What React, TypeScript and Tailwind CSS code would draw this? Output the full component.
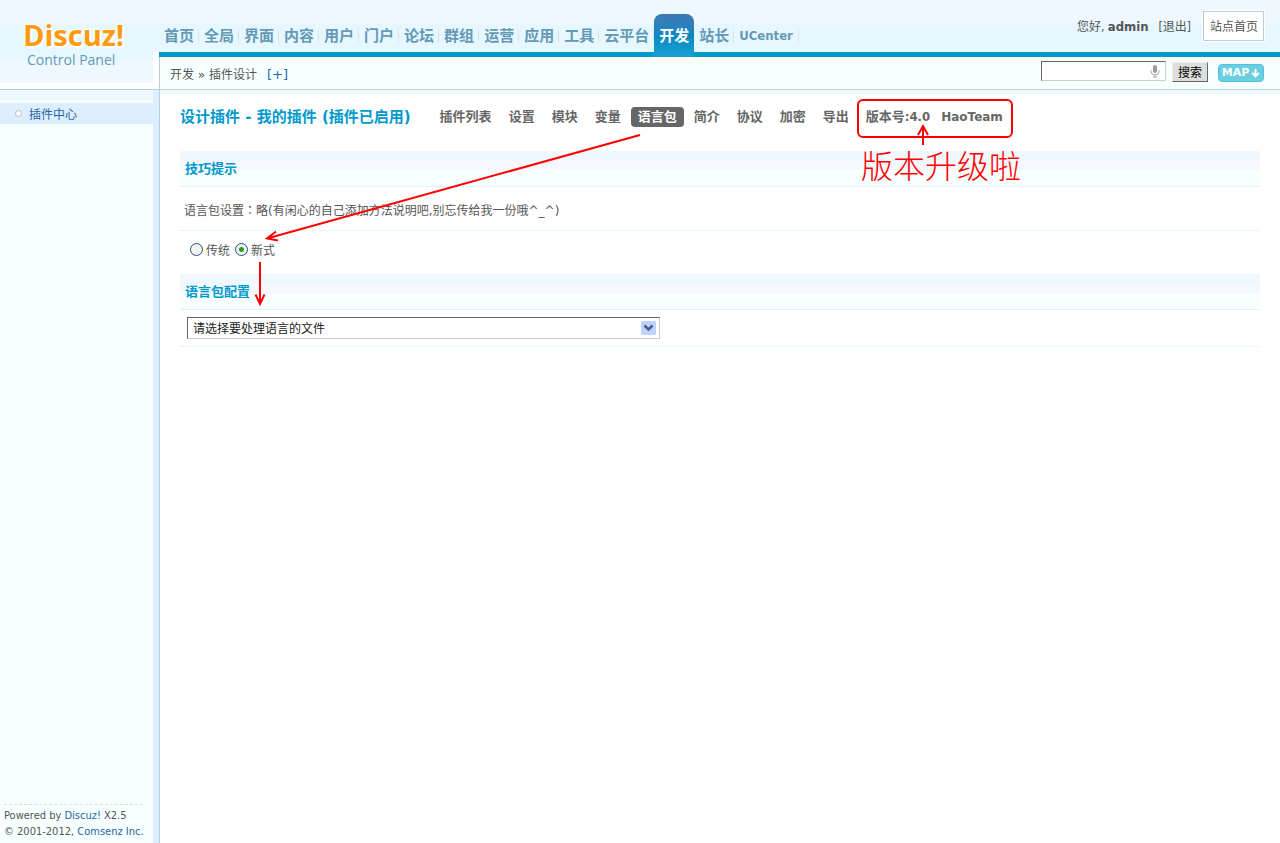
import { useState } from "react"

interface NavItem {
  name: string
  href: string
}

// Constants
const TOP_NAV: readonly NavItem[] = [
  { name: "首页", href: "#index" },
  { name: "全局", href: "#global" },
  { name: "界面", href: "#style" },
  { name: "内容", href: "#topic" },
  { name: "用户", href: "#user" },
  { name: "门户", href: "#portal" },
  { name: "论坛", href: "#forum" },
  { name: "群组", href: "#group" },
  { name: "运营", href: "#extended" },
  { name: "应用", href: "#plugin" },
  { name: "工具", href: "#tools" },
  { name: "云平台", href: "#cloud" },
  { name: "开发", href: "#dev" },
  { name: "站长", href: "#founder" },
  { name: "UCenter", href: "#uc" },
]

const SUB_NAV: readonly NavItem[] = [
  { name: "插件列表", href: "#list" },
  { name: "设置", href: "#setting" },
  { name: "模块", href: "#modules" },
  { name: "变量", href: "#vars" },
  { name: "语言包", href: "#lang" },
  { name: "简介", href: "#intro" },
  { name: "协议", href: "#license" },
  { name: "加密", href: "#encrypt" },
  { name: "导出", href: "#export" },
]

const ACTIVE_TOP = "开发"
const ACTIVE_SUB = "语言包"

// Components
const Logo = () => (
  <a href="#home" className="flex h-[83px] flex-col pt-5 pl-[23px] whitespace-nowrap">
    <span className="font-['Open_Sans',sans-serif] text-[29px] leading-[30px] font-bold text-[#ff9a10] [text-shadow:1px_1px_1px_#fff,2px_2px_1px_#fff,-1px_-1px_1px_#fff]">
      Discuz!
    </span>
    <span className="pl-1 font-['Open_Sans',sans-serif] text-[14px] leading-5 text-[#639ab5]">Control Panel</span>
  </a>
)

const TopNav = () => (
  <nav className="flex items-end" aria-label="主菜单">
    {TOP_NAV.map(item =>
      item.name === ACTIVE_TOP ? (
        <a
          key={item.name}
          href={item.href}
          aria-current="page"
          className="z-10 -mb-[5px] h-[43px] rounded-t-lg bg-linear-to-b from-[#3b79b5] via-[#0b87c2] to-[#18a2d3] px-[5px] text-[15px] leading-[45px] font-bold whitespace-nowrap text-white"
        >
          {item.name}
        </a>
      ) : (
        <a
          key={item.name}
          href={item.href}
          className="flex h-[33px] items-start text-[15px] leading-[34px] font-bold whitespace-nowrap text-[#639ab5]"
        >
          <span className={item.name === "UCenter" ? "px-[5px] text-[13px]" : "pr-1 pl-[5px]"}>{item.name}</span>
          <span className="mt-[7px] h-5 w-px bg-linear-to-b from-[#eef5fa] via-[#d3dde5] to-[#eef5fa]" />
        </a>
      ),
    )}
  </nav>
)

const Toolbar = () => (
  <div className="flex h-8 items-center justify-between border-t-[5px] border-white bg-[#f7ffff] pr-4 pb-0.5 pl-2.5">
    <div className="flex items-center font-['DejaVu_Sans','Noto_Sans_CJK_SC',sans-serif] text-[12px]">
      <span className="whitespace-pre">开发 » 插件设计</span>
      <a href="#add" className="ml-2.5 text-[13px] text-[#2366a8]">
        [+]
      </a>
    </div>
    <form className="flex items-center" onSubmit={e => e.preventDefault()}>
      <div className="-mt-[7px] flex h-5 w-[125px] items-center border border-t-[#666] border-r-[#ccc] border-b-[#ccc] border-l-[#666] bg-white">
        <input type="text" aria-label="搜索" className="h-full min-w-0 flex-1 bg-transparent px-1 text-[12px] outline-none" />
        <svg width="10" height="14" viewBox="0 0 10 14" className="mr-[5px]" aria-hidden="true">
          <rect x="3" y="1" width="4" height="8" rx="2" fill="#999" />
          <path d="M1 6v1.500a4 3.500 0 0 0 8 0V6M5 11v2M3 13h4" fill="none" stroke="#aaa" />
        </svg>
      </div>
      <button
        type="submit"
        className="-mt-[5px] ml-1.5 h-5 w-9 border border-t-[#eee] border-r-[#666] border-b-[#666] border-l-[#eee] bg-[#ddd] text-[12px] leading-5 text-black"
      >
        搜索
      </button>
      <button
        type="button"
        className="-mt-[3px] ml-2.5 flex h-[18px] w-[46px] items-center justify-center gap-0.5 rounded border border-[#52c3de] bg-[#6bcfe2] font-['DejaVu_Sans',sans-serif] text-[11px] leading-4 font-bold text-white"
      >
        MAP
        <svg width="9" height="10" viewBox="0 0 9 10" aria-hidden="true">
          <path d="M4.500 1v7M1.200 5l3.300 3.300L7.800 5" fill="none" stroke="#fff" strokeWidth="2" />
        </svg>
      </button>
    </form>
  </div>
)

const Header = () => (
  <header className="flex border-b border-[#b5cfde]">
    <div className="w-[153px] shrink-0 border-b-[6px] border-white bg-[linear-gradient(#eff7ff_24px,#e7f7ff_24px,#e7f7ff_60px,#eff7ff_60px)]">
      <Logo />
    </div>
    <div className="min-w-0 flex-1">
      <div className="flex h-[52px] justify-between bg-[linear-gradient(#eff7ff_24px,#e7f7ff_24px)] pr-4 pl-1.5">
        <TopNav />
        <div className="flex items-start pt-[11px] text-[12px] leading-8">
          <span>
            您好, <b className="text-[13px]">admin</b>
          </span>
          <a href="#logout" className="ml-2.5">
            [退出]
          </a>
          <a
            href="#site"
            className="ml-3 block h-[30px] border border-[#b5cfde] bg-white pr-[5px] pl-1.5 leading-[30px] outline outline-white"
          >
            站点首页
          </a>
        </div>
      </div>
      <div className="flex">
        <div className="w-1.5 bg-white" />
        <div className="min-w-0 flex-1 border-t-[5px] border-[#0099cc]">
          <div className="border-l border-[#b5cfde]">
            <Toolbar />
          </div>
        </div>
      </div>
    </div>
  </header>
)

const Sidebar = () => (
  <aside className="flex w-40 shrink-0 flex-col border-r border-[#b5cfde] bg-[linear-gradient(90deg,#f7ffff_153px,#ddeeff_153px)]">
    <div className="mr-1.5 mb-[3px] h-2.5 bg-[#eff7ff]" />
    <a href="#plugins" className="flex h-[21px] items-center bg-[#ddeeff] pl-[15px] text-[12px] leading-5 text-[#2366a8]">
      <span className="mr-[7px] size-[7px] rounded-full border border-[#bbb] bg-white" />
      <span className="pt-0.5">插件中心</span>
    </a>
    <footer className="mt-auto mr-4 ml-1 border-t border-dashed border-[#ddd] pt-[3px] text-[11px] leading-4 whitespace-nowrap">
      <p>
        Powered by{" "}
        <a href="#discuz" className="text-[#2366a8]">
          Discuz!
        </a>{" "}
        X2.5
      </p>
      <p className="pb-[3px]">
        © 2001-2012,{" "}
        <a href="#comsenz" className="text-[#2366a8]">
          Comsenz Inc.
        </a>
      </p>
    </footer>
  </aside>
)

const SectionTitle = ({ title }: { title: string }) => (
  <h2 className="h-9 border-b border-dotted border-[#cceeff] bg-[linear-gradient(#eff7ff_10px,#f7f7ff_10px,#f7f7ff_19px,#f7ffff_19px)] px-[5px] text-[13px] leading-[35px] font-bold text-[#0099cc]">
    {title}
  </h2>
)

const Annotations = () => (
  <div className="pointer-events-none absolute top-0 left-0">
    <svg width="860" height="230" viewBox="0 0 860 230" fill="none" stroke="#f00" strokeWidth="2" aria-hidden="true">
      <rect x="698" y="10" width="154" height="37" rx="5" />
      <path d="M763 55V36M758 45l5-9 5 9" />
      <path d="M480 45L107 148.500M116 141.500l-9 7 11 2" />
      <path d="M100 172v42M95.500 204.500l4.500 9.500 4.500-9.500" />
    </svg>
    <p className="absolute top-[52px] left-[701px] text-[32px] leading-[50px] font-light whitespace-nowrap text-[#f00]">版本升级啦</p>
  </div>
)

const Radio = ({ label, checked, onChange }: { label: string; checked: boolean; onChange: () => void }) => (
  <label className="flex items-center gap-[3px]">
    <input
      type="radio"
      name="mode"
      checked={checked}
      onChange={onChange}
      className="mb-1 size-[13px] appearance-none rounded-full border border-[#21527b] bg-[#f4f4f0] checked:bg-[radial-gradient(circle,#21a121_2px,#f4f4f0_3px)]"
    />
    {label}
  </label>
)

const LanguageForm = () => {
  const [mode, setMode] = useState("new")

  return (
    <form>
      <SectionTitle title="技巧提示" />
      <p className="h-11 border-b border-dotted border-[#cceeff] px-1 pt-3 font-['DejaVu_Sans','Noto_Sans_CJK_SC',sans-serif] text-[12px] leading-[21px]">
        语言包设置<span className="font-['Noto_Sans_CJK_TC',sans-serif]" lang="zh-TW">：</span>
        略(有闲心的自己添加方法说明吧,别忘传给我一份哦^_^)
      </p>
      <div className="flex h-[43px] items-center gap-[5px] px-2.5 pb-[3px] text-[12px]">
        <Radio label="传统" checked={mode === "old"} onChange={() => setMode("old")} />
        <Radio label="新式" checked={mode === "new"} onChange={() => setMode("new")} />
      </div>
      <SectionTitle title="语言包配置" />
      <div className="border-b border-dotted border-[#cceeff] px-[7px] py-[7px]">
        <div className="relative w-[473px]">
          <select
            aria-label="语言文件"
            className="block h-[22px] w-full appearance-none border border-t-[#666] border-r-[#ccc] border-b-[#ccc] border-l-[#666] bg-white px-[5px] pt-px text-[12px] leading-5 text-[#222]"
          >
            <option>请选择要处理语言的文件</option>
          </select>
          <svg width="15" height="14" viewBox="0 0 15 14" className="pointer-events-none absolute top-1 right-1" aria-hidden="true">
            <rect width="15" height="14" rx="1" fill="#bdd3ff" />
            <path d="M3.500 4.500l4 4 4-4" fill="none" stroke="#4a6184" strokeWidth="2.500" />
          </svg>
        </div>
      </div>
    </form>
  )
}

export default function App() {
  return (
    <div className="flex min-h-screen flex-col bg-white font-['DejaVu_Sans_Condensed','Noto_Sans','Noto_Sans_CJK_SC',sans-serif] text-[#555]">
      <Header />
      <div className="flex flex-1">
        <Sidebar />
        <main className="relative min-w-0 flex-1 bg-[linear-gradient(#eff7ff_4px,#f7ffff_4px,#f7ffff_7px,#fff_7px)] px-5">
          <div className="mb-[7px] flex h-[54px] items-center whitespace-nowrap">
            <h1 className="mr-[22px] font-['DejaVu_Sans','Noto_Sans_CJK_SC',sans-serif] text-[15px] font-bold text-[#0099cc]">
              设计插件 - 我的插件 (插件已启用)
            </h1>
            <ul className="flex items-center gap-[3px] text-[13px] leading-5 font-bold text-[#666]">
              {SUB_NAV.map(item => (
                <li key={item.name}>
                  <a
                    href={item.href}
                    className={item.name === ACTIVE_SUB ? "block rounded bg-[#666] px-[7px] text-white" : "block px-[7px]"}
                  >
                    {item.name}
                  </a>
                </li>
              ))}
              <li className="pl-[7px]">版本号:4.0</li>
              <li className="pl-2 font-['DejaVu_Sans',sans-serif] text-[12px]">HaoTeam</li>
            </ul>
          </div>
          <LanguageForm />
          <Annotations />
        </main>
      </div>
    </div>
  )
}
